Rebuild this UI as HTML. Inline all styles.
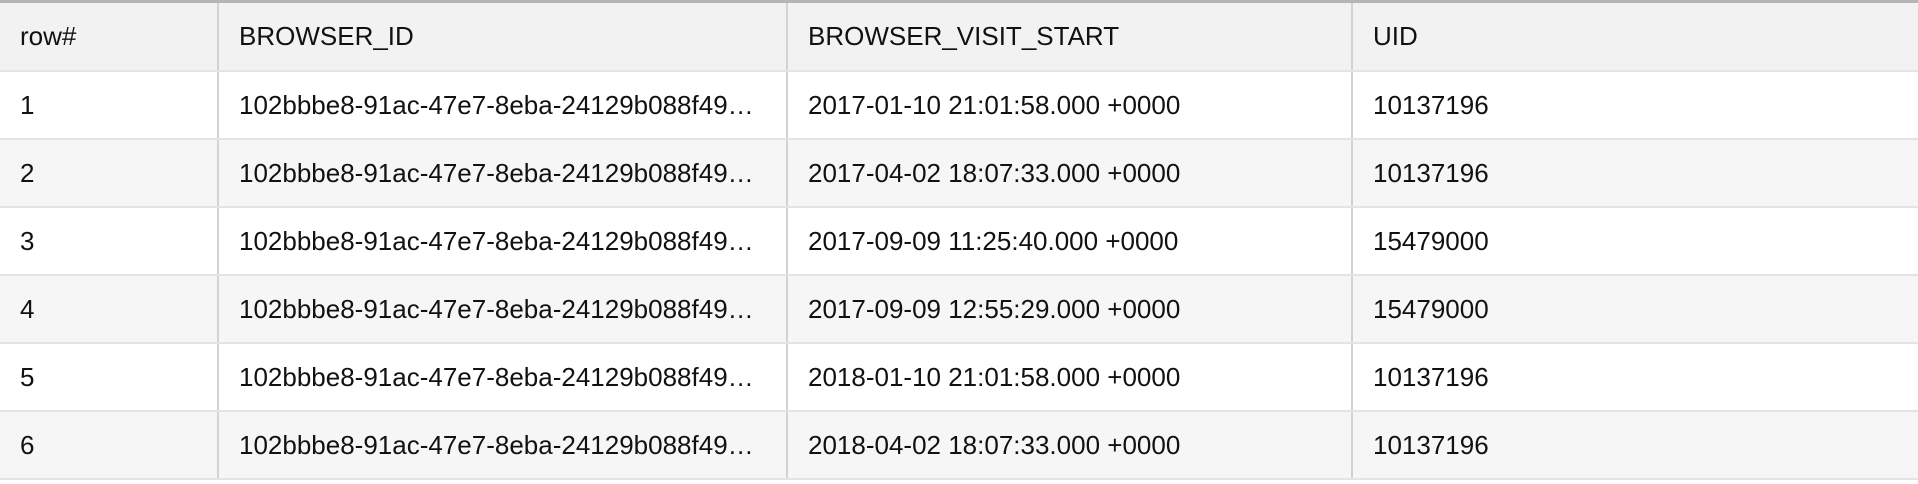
<!DOCTYPE html>
<html><head><meta charset="utf-8"><style>
html,body{margin:0;padding:0;width:1918px;height:484px;overflow:hidden;background:#fff;font-family:"Liberation Sans",Arial,sans-serif;}
table{border-collapse:collapse;width:1918px;table-layout:fixed;border-top:3px solid #b5b5b5;}
td{font-size:26px;color:#111;padding:0 0 0 20px;white-space:nowrap;overflow:hidden;text-overflow:ellipsis;height:66px;border-bottom:2px solid #e4e4e4;border-left:2px solid #d2d2d2;}
td:first-child{border-left:none;}
tr.h td{background:#f2f2f2;height:67px;}
tr:nth-child(even) td{background:#fff;}
tr:nth-child(odd):not(.h) td{background:#f6f6f6;}
</style></head><body>
<table>
<colgroup><col style="width:218px"><col style="width:569px"><col style="width:565px"><col></colgroup>
<tr class="h"><td>row#</td><td>BROWSER_ID</td><td>BROWSER_VISIT_START</td><td>UID</td></tr>
<tr><td>1</td><td>102bbbe8-91ac-47e7-8eba-24129b088f49…</td><td>2017-01-10 21:01:58.000 +0000</td><td>10137196</td></tr>
<tr><td>2</td><td>102bbbe8-91ac-47e7-8eba-24129b088f49…</td><td>2017-04-02 18:07:33.000 +0000</td><td>10137196</td></tr>
<tr><td>3</td><td>102bbbe8-91ac-47e7-8eba-24129b088f49…</td><td>2017-09-09 11:25:40.000 +0000</td><td>15479000</td></tr>
<tr><td>4</td><td>102bbbe8-91ac-47e7-8eba-24129b088f49…</td><td>2017-09-09 12:55:29.000 +0000</td><td>15479000</td></tr>
<tr><td>5</td><td>102bbbe8-91ac-47e7-8eba-24129b088f49…</td><td>2018-01-10 21:01:58.000 +0000</td><td>10137196</td></tr>
<tr><td>6</td><td>102bbbe8-91ac-47e7-8eba-24129b088f49…</td><td>2018-04-02 18:07:33.000 +0000</td><td>10137196</td></tr>
</table>
</body></html>
